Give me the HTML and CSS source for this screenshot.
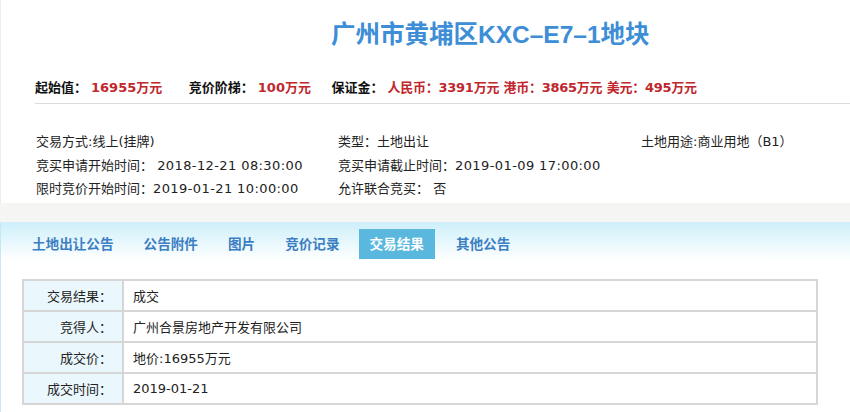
FILE: index.html
```html
<!DOCTYPE html>
<html lang="zh-CN">
<head>
<meta charset="utf-8">
<title>广州市黄埔区KXC-E7-1地块</title>
<link rel="stylesheet" href="styles.css">
</head>
<body>
<div class="page">
  <section class="head">
    <h1 class="title">广州市黄埔区KXC–E7–1地块</h1>
    <div class="prices">
      <span class="lbl">起始值：</span><span class="val v1">16955万元</span>
      <span class="lbl">竞价阶梯：</span><span class="val v2">100万元</span>
      <span class="lbl">保证金：</span><span class="val v3">人民币：3391万元 港币：3865万元 美元：495万元</span>
    </div>
    <div class="info">
      <div>交易方式:线上(挂牌)</div>
      <div>类型：土地出让</div>
      <div>土地用途:商业用地（B1）</div>
      <div>竞买申请开始时间：&nbsp;<span class="num">2018-12-21 08:30:00</span></div>
      <div>竞买申请截止时间：<span class="num">2019-01-09 17:00:00</span></div>
      <div></div>
      <div>限时竞价开始时间：<span class="num">2019-01-21 10:00:00</span></div>
      <div>允许联合竞买：&nbsp;否</div>
      <div></div>
    </div>
  </section>
  <section class="detail">
    <nav class="tabs">
      <a class="tab">土地出让公告</a>
      <a class="tab">公告附件</a>
      <a class="tab">图片</a>
      <a class="tab">竞价记录</a>
      <a class="tab active">交易结果</a>
      <a class="tab">其他公告</a>
    </nav>
    <table class="result">
      <tr><th>交易结果：</th><td>成交</td></tr>
      <tr><th>竞得人：</th><td>广州合景房地产开发有限公司</td></tr>
      <tr><th>成交价：</th><td>地价:16955万元</td></tr>
      <tr><th>成交时间：</th><td>2019-01-21</td></tr>
    </table>
  </section>
</div>
</body>
</html>
```
FILE: styles.css
```css
html, body {
  margin: 0;
  padding: 0;
}
body {
  background: #f5f5f3;
  font-family: "DejaVu Sans", "Noto Sans CJK SC", sans-serif;
  font-size: 13px;
  color: #222;
}
.page {
  width: 850px;
  height: 412px;
  overflow: hidden;
}
.head {
  background: #fff;
  border-left: 1px solid #ececec;
  padding-left: 34px;
  padding-top: 20px;
  padding-bottom: 2px;
  margin-bottom: 19px;
}
.title {
  margin: 0;
  padding-left: 296px;
  font-family: "Liberation Sans", "Noto Sans CJK SC", sans-serif;
  font-size: 24.5px;
  line-height: 30px;
  font-weight: bold;
  color: #3d8ed6;
}
.prices {
  margin-top: 28px;
  line-height: 20px;
  padding-bottom: 5px;
  border-bottom: 1px solid #dcdcdc;
  font-weight: bold;
  white-space: nowrap;
}
.prices .lbl {
  color: #111;
}
.prices .val {
  color: #c0272d;
  margin-left: 4px;
}
.prices .v1 {
  margin-right: 22px;
}
.prices .v2 {
  margin-right: 16px;
}
.prices .v3 {
  letter-spacing: -0.25px;
}
.info {
  margin-top: 26px;
  display: grid;
  grid-template-columns: 302px 303px 200px;
  line-height: 23.5px;
  padding-left: 1px;
  white-space: nowrap;
}
.num {
  letter-spacing: 0.4px;
}
.detail {
  background: linear-gradient(#cdeffa 0, #ffffff 38px);
  background-color: #fff;
  border-left: 1px solid #c6e8f5;
  padding-top: 7px;
  height: 190px;
}
.tabs {
  display: flex;
  padding-left: 20px;
  gap: 8px;
}
.tab {
  display: block;
  padding: 0 11px 2px;
  line-height: 28px;
  font-family: "Noto Sans CJK SC", sans-serif;
  font-size: 13.6px;
  font-weight: bold;
  color: #3b7ec3;
}
.tab.active {
  background: #5ab8df;
  color: #fff;
}
.tab.active + .tab {
  margin-left: 2px;
}
.result {
  margin-top: 20px;
  margin-left: 21px;
  width: 796px;
  border-collapse: collapse;
  border: 2px solid #cfcfcf;
}
.result th, .result td {
  border: 2px solid #d6d6d6;
  height: 29px;
  padding: 0;
  font-weight: normal;
  text-align: left;
}
.result th {
  width: 88px;
  padding-right: 10px;
  text-align: right;
  background: #eaf8fd;
}
.result td {
  padding-left: 9px;
  background: #fff;
}
```
